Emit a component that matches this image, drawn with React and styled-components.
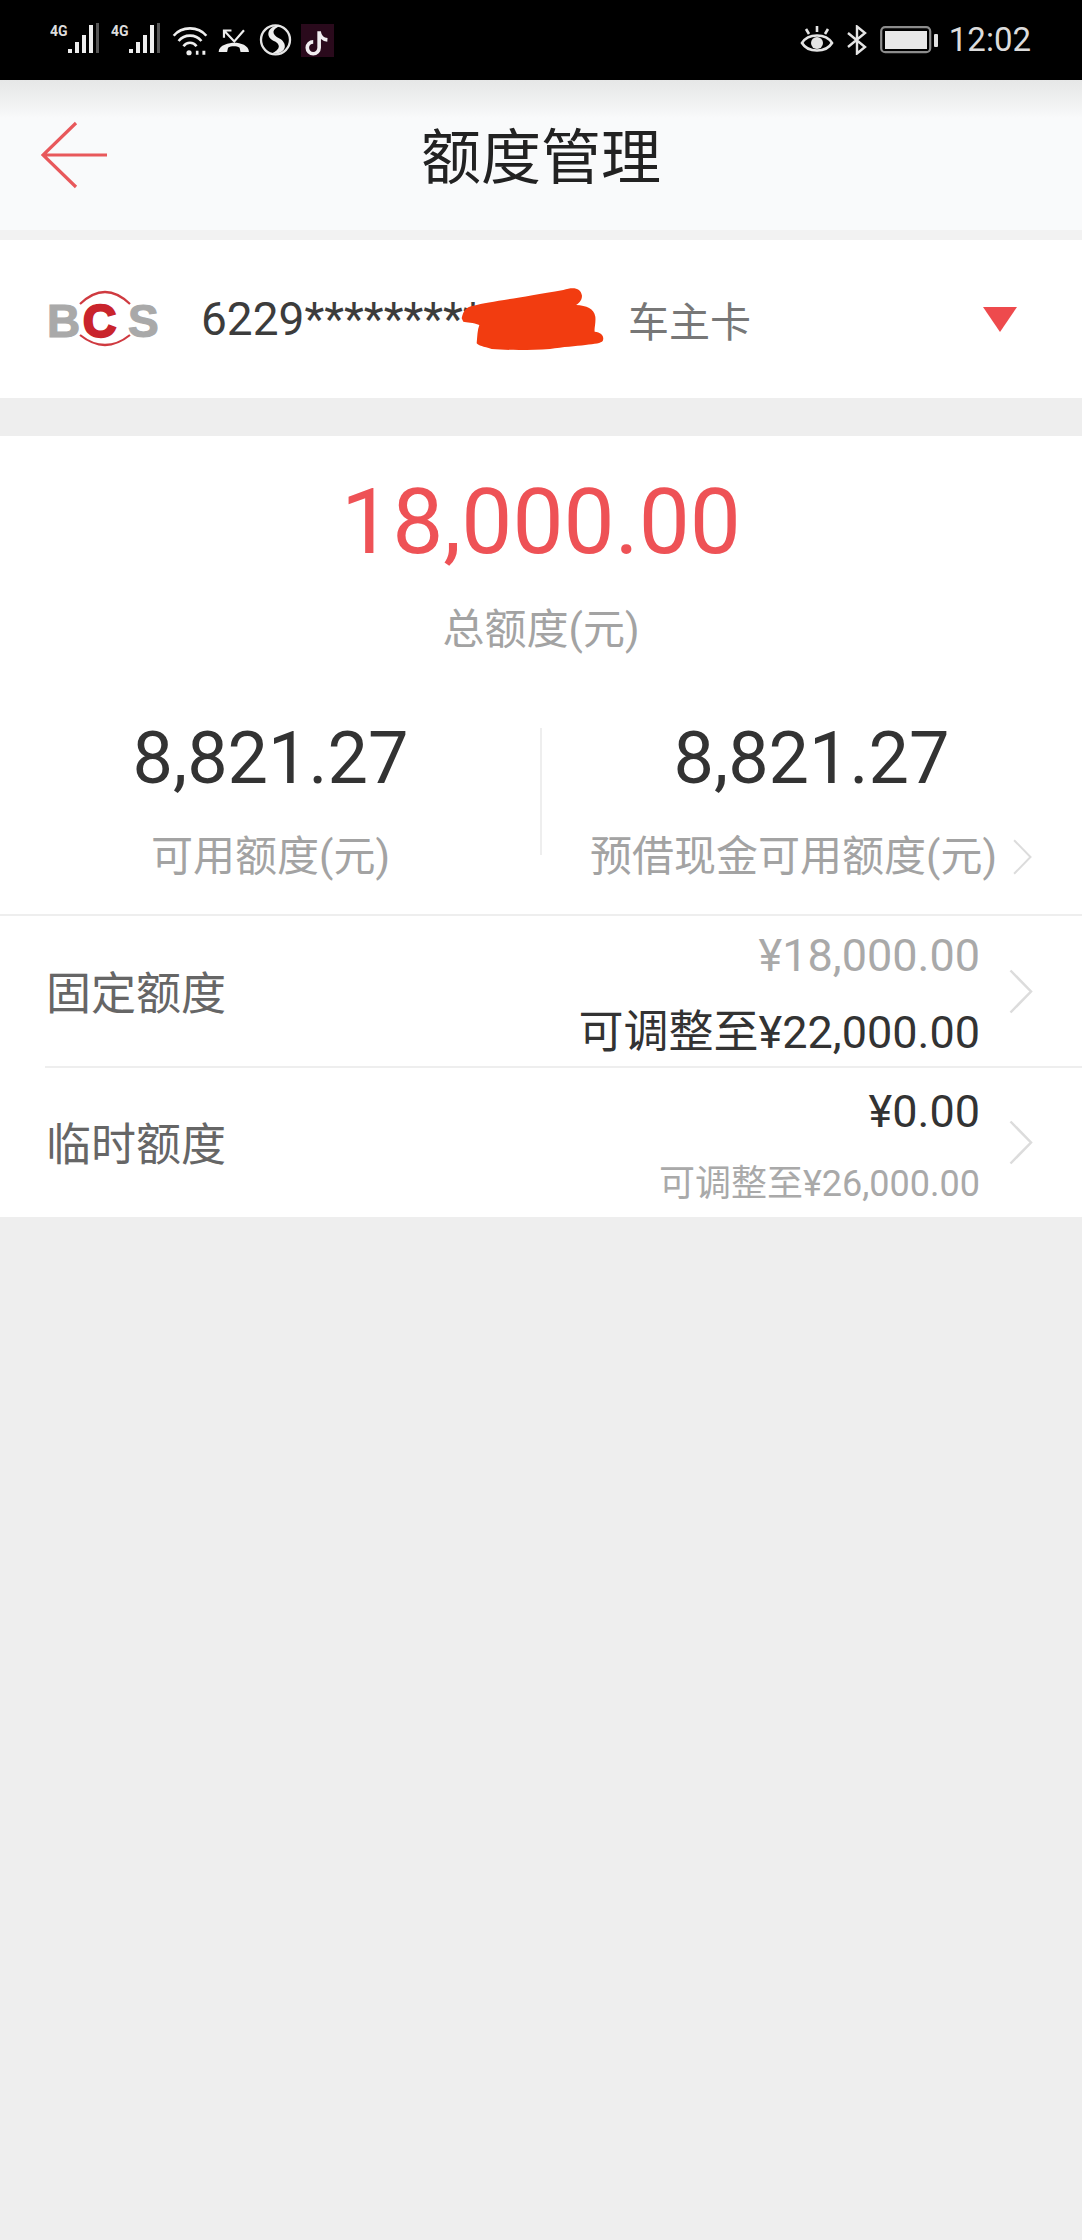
import React from "react";
import styled, { createGlobalStyle } from "styled-components";

const GlobalStyle = createGlobalStyle`
  html, body {
    margin: 0;
    padding: 0;
    background: #eeeeee;
  }
  body {
    font-family: Roboto, "Noto Sans CJK SC", sans-serif;
  }
`;

const Page = styled.div`
  width: 1082px;
  height: 2240px;
  background: #eeeeee;
  overflow: hidden;
`;

const StatusBar = styled.div`
  height: 80px;
  background: #000;
  display: flex;
  align-items: center;
  justify-content: space-between;
  padding: 0 51px 0 50px;
  box-sizing: border-box;
  color: #e8e8e8;
`;

const StatusGroup = styled.div`
  display: flex;
  align-items: center;
  gap: ${(p) => p.$gap || 9}px;
`;

const Clock = styled.span`
  font-size: 33px;
  color: #dcdcdc;
  line-height: 40px;
`;

const Header = styled.div`
  height: 160px;
  box-sizing: border-box;
  background: linear-gradient(#e6e7e7 0, #f1f2f2 24px, #f9fafb 38px);
  border-bottom: 10px solid #f2f2f2;
  display: grid;
  grid-template-columns: 150px 1fr 150px;
  align-items: center;
`;

const BackButton = styled.div`
  padding-left: 41px;
  display: flex;
`;

const Title = styled.div`
  text-align: center;
  font-size: 60px;
  color: #222;
  line-height: 70px;
  margin-top: 8px;
`;

const CardRow = styled.div`
  position: relative;
  height: 158px;
  background: #fff;
  display: flex;
  align-items: center;
  padding: 0 65px 0 46px;
  box-sizing: border-box;
`;

const LogoSlot = styled.div`
  display: flex;
  margin-top: 4px;
`;

const CardNumber = styled.span`
  font-size: 46px;
  color: #3c3c3c;
  margin: 0 0 0 43px;
  width: 427px;
  white-space: nowrap;
`;

const CardType = styled.span`
  font-size: 41px;
  color: #777;
  flex: 1;
`;

const Scribble = styled.svg`
  position: absolute;
  left: 450px;
  top: 35px;
`;

const Section = styled.div`
  margin-top: 38px;
  background: #fff;
`;

const Total = styled.div`
  height: 230px;
  box-sizing: border-box;
  padding-top: 31px;
  display: flex;
  flex-direction: column;
  align-items: center;
`;

const TotalAmount = styled.div`
  font-size: 91px;
  line-height: 110px;
  color: #ee5256;
`;

const Caption = styled.div`
  font-size: 42px;
  line-height: 50px;
  color: #a3a3a3;
  white-space: nowrap;
`;

const TotalCaption = styled(Caption)`
  margin-top: 28px;
`;

const Stats = styled.div`
  position: relative;
  height: 250px;
  box-sizing: border-box;
  display: grid;
  grid-template-columns: 1fr 1fr;
  border-bottom: 2px solid #eeeeee;
`;

const StatDivider = styled.div`
  position: absolute;
  left: 540px;
  top: 62px;
  width: 2px;
  height: 127px;
  background: #eeeeee;
`;

const Stat = styled.div`
  display: flex;
  flex-direction: column;
  align-items: center;
  padding-top: 53px;
`;

const StatAmount = styled.div`
  font-size: 72px;
  line-height: 80px;
  color: #333;
`;

const StatLabel = styled.div`
  margin-top: 33px;
  display: flex;
  align-items: center;
  gap: 15px;
`;

const LimitRow = styled.div`
  height: ${(p) => p.$height}px;
  box-sizing: border-box;
  margin-left: 45px;
  padding-right: 49px;
  display: flex;
  align-items: center;
  justify-content: space-between;
  border-top: ${(p) => (p.$first ? "none" : "2px solid #eeeeee")};
`;

const LimitName = styled.div`
  font-size: 45px;
  line-height: 52px;
  color: #666;
  margin: 7px 0 0 1px;
`;

const LimitRight = styled.div`
  display: flex;
  align-items: center;
  gap: 29px;
`;

const LimitValues = styled.div`
  display: flex;
  flex-direction: column;
  align-items: flex-end;
  gap: ${(p) => p.$gap}px;
  margin-top: ${(p) => p.$shift}px;
`;

const Value = styled.div`
  font-size: ${(p) => p.$size || 45}px;
  line-height: 52px;
  color: ${(p) => p.$color};
  white-space: nowrap;
`;

const Caret = styled.div`
  width: 0;
  height: 0;
  border-left: 17px solid transparent;
  border-right: 17px solid transparent;
  border-top: 25px solid #ee4a4d;
`;

const Chevron = ({ width = 24, height = 45 }) => (
  <svg width={width} height={height} viewBox="0 0 24 45" fill="none">
    <path d="M1.5 1.5 L22 22.5 L1.5 43.5" stroke="#dcdcdc" strokeWidth="2.5" />
  </svg>
);

const SignalIcon = () => (
  <svg width="52" height="34" viewBox="0 0 52 34">
    <text x="0" y="13" fontFamily="Roboto" fontSize="14" fontWeight="700" fill="#ddd">4G</text>
    <rect x="18" y="26" width="4" height="4" fill="#eee" />
    <rect x="25" y="19" width="4" height="11" fill="#eee" />
    <rect x="32" y="12" width="4" height="18" fill="#eee" />
    <rect x="39" y="2" width="4" height="28" fill="#eee" />
    <rect x="46" y="0" width="3" height="30" fill="#555" />
  </svg>
);

const WifiIcon = () => (
  <svg width="36" height="31" viewBox="20 25 110 95" fill="none" stroke="#eee" strokeWidth="8">
    <path d="M25 58 C50 28 100 28 125 58" />
    <path d="M40 74 C58 52 92 52 110 74" />
    <path d="M55 90 C65 76 85 76 95 90" />
    <circle cx="72" cy="110" r="8" fill="#eee" stroke="none" />
    <path d="M93 110 h8 M113 110 h9" strokeWidth="12" />
  </svg>
);

const MissedCallIcon = () => (
  <svg width="33" height="25" viewBox="150 35 105 80" fill="none">
    <path d="M172 66 V43 H196 M172 43 L205 78 L236 42" stroke="#eee" strokeWidth="7" />
    <path
      d="M155 112 C155 88 190 82 205 82 C225 82 252 90 252 112 L225 112 L222 98 C212 92 195 92 185 98 L182 112 Z"
      fill="#eee"
    />
  </svg>
);

const SogouIcon = () => (
  <svg width="33" height="32" viewBox="278 28 100 97">
    <circle cx="328" cy="76" r="44" fill="#000" stroke="#e4e4e4" strokeWidth="7" />
    <path
      d="M345 33 C305 30 295 65 320 78 C345 88 345 105 315 118 C365 120 365 85 340 72 C315 60 315 42 345 33 Z"
      fill="#eee"
    />
  </svg>
);

const TikTokIcon = () => (
  <svg width="33" height="33" viewBox="405 28 100 100">
    <rect x="405" y="28" width="100" height="100" fill="#2a0a1c" />
    <path
      d="M460 50 V100 A18 18 0 1 1 442 82 M460 52 C462 65 472 75 485 76"
      fill="none"
      stroke="#f0eef0"
      strokeWidth="11"
    />
  </svg>
);

const EyeIcon = () => (
  <svg width="34" height="31" viewBox="0 0 34 31" fill="none" stroke="#e4e4e4" strokeWidth="2.6">
    <path d="M2 18 C8 8 26 8 32 18 C26 28 8 28 2 18 Z" />
    <circle cx="17" cy="18" r="6" fill="#e4e4e4" stroke="none" />
    <path d="M17 1 V7 M6 4 L9 9 M28 4 L25 9" />
  </svg>
);

const BluetoothIcon = () => (
  <svg width="24" height="30" viewBox="-2 0 24 30" fill="none" stroke="#e4e4e4" strokeWidth="2.4">
    <path d="M1 8 L18 22 L10 28.5 V1.5 L18 8 L1 22" />
  </svg>
);

const BatteryIcon = () => (
  <svg width="58" height="28" viewBox="0 0 58 28">
    <rect x="1.2" y="1.2" width="49" height="25" rx="4" fill="none" stroke="#8c8c8c" strokeWidth="2.2" />
    <rect x="5" y="5" width="42" height="18" fill="#e8e8e8" />
    <rect x="54" y="8" width="4" height="13" rx="1" fill="#e0e0e0" />
  </svg>
);

const BackArrow = () => (
  <svg width="68" height="68" viewBox="0 0 68 68" fill="none" stroke="#e8585b" strokeWidth="3.2">
    <path d="M35 2 L2 34 L35 66 M2 34 H66" />
  </svg>
);

const BankLogo = () => (
  <svg width="112" height="62" viewBox="0 0 112 62">
    <g fontFamily="Liberation Sans" fontWeight="700" fontSize="46">
      <text x="1" y="47" fill="#a9a9a9" stroke="#a9a9a9" strokeWidth="1.2">B</text>
      <text x="37" y="47" fill="#c9242c" stroke="#c9242c" strokeWidth="2.4">C</text>
      <text x="82" y="47" fill="#a9a9a9" stroke="#a9a9a9" strokeWidth="1.2">S</text>
    </g>
    <g fill="none" stroke="#cf3a40" strokeWidth="2.2">
      <path d="M34 14 Q59 -10 84 14" />
      <path d="M34 45 Q59 65 84 45" />
    </g>
  </svg>
);

const App = () => {
  return (
    <Page>
      <GlobalStyle />
      <StatusBar>
        <StatusGroup>
          <SignalIcon />
          <SignalIcon />
          <WifiIcon />
          <MissedCallIcon />
          <SogouIcon />
          <TikTokIcon />
        </StatusGroup>
        <StatusGroup $gap={11}>
          <EyeIcon />
          <BluetoothIcon />
          <BatteryIcon />
          <Clock>12:02</Clock>
        </StatusGroup>
      </StatusBar>

      <Header>
        <BackButton>
          <BackArrow />
        </BackButton>
        <Title>额度管理</Title>
      </Header>

      <CardRow>
        <LogoSlot>
          <BankLogo />
        </LogoSlot>
        <CardNumber>6229*********</CardNumber>
        <Scribble width="170" height="90" viewBox="0 0 510 270">
          <path
            d="M35 130 C40 105 50 95 70 92 C120 80 200 70 340 45 C370 35 392 38 396 62 C396 78 385 85 378 90 C410 92 432 100 436 125 C438 145 432 160 434 170 C455 172 464 185 458 198 C450 210 380 210 300 222 C240 226 170 226 125 222 C100 215 85 212 80 205 C82 185 82 165 88 150 C70 142 50 142 40 140 Z"
            fill="#f23c10"
          />
        </Scribble>
        <CardType>车主卡</CardType>
        <Caret />
      </CardRow>

      <Section>
        <Total>
          <TotalAmount>18,000.00</TotalAmount>
          <TotalCaption>总额度(元)</TotalCaption>
        </Total>
        <Stats>
          <Stat>
            <StatAmount>8,821.27</StatAmount>
            <StatLabel>
              <Caption>可用额度(元)</Caption>
            </StatLabel>
          </Stat>
          <StatDivider />
          <Stat>
            <StatAmount>8,821.27</StatAmount>
            <StatLabel>
              <Caption>预借现金可用额度(元)</Caption>
              <Chevron width={21} height={36} />
            </StatLabel>
          </Stat>
        </Stats>
        <LimitRow $first $height={150}>
          <LimitName>固定额度</LimitName>
          <LimitRight>
            <LimitValues $gap={25} $shift={7}>
              <Value $color="#a9a9a9">¥18,000.00</Value>
              <Value $color="#333">可调整至¥22,000.00</Value>
            </LimitValues>
            <Chevron />
          </LimitRight>
        </LimitRow>
        <LimitRow $height={151}>
          <LimitName>临时额度</LimitName>
          <LimitRight>
            <LimitValues $gap={20} $shift={11}>
              <Value $color="#333">¥0.00</Value>
              <Value $size={36} $color="#a9a9a9">可调整至¥26,000.00</Value>
            </LimitValues>
            <Chevron />
          </LimitRight>
        </LimitRow>
      </Section>
    </Page>
  );
};

export default App;
